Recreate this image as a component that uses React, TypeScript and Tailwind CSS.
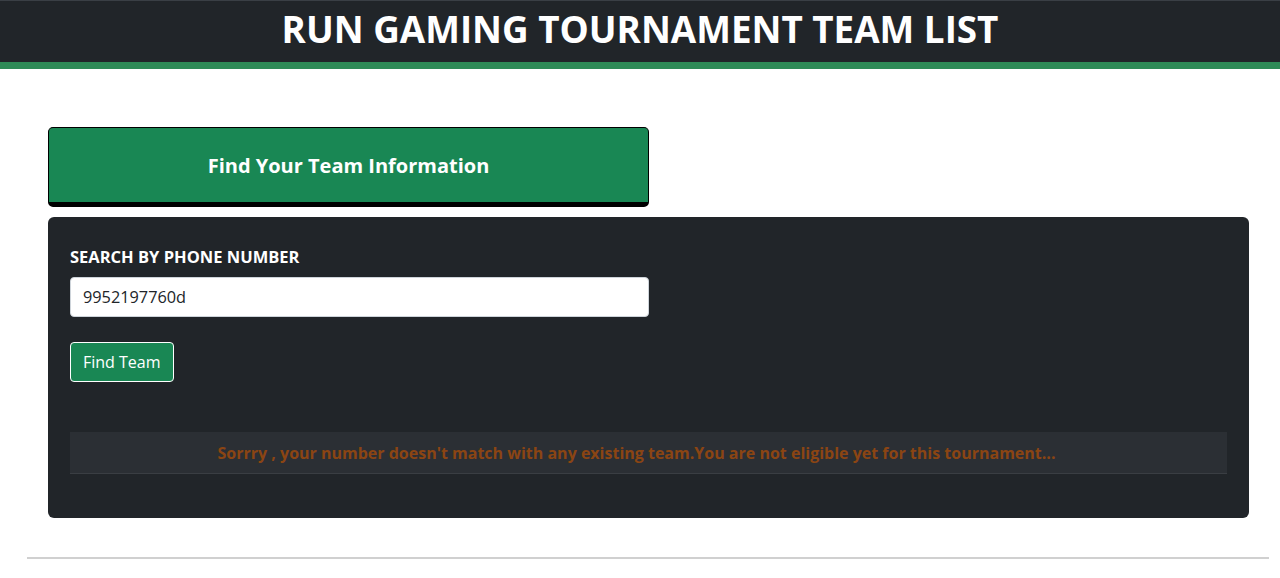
import React from 'react';

export default function App() {
  return (
    <div className="min-h-[578px] bg-white" style={{ fontFamily: '"Open Sans", "Noto Sans", sans-serif' }}>
      <header className="h-[69px] bg-[#212529] border-t border-[#3a3f45] border-b-[7px] border-b-[#2e8b57] flex items-center justify-center pb-[5px]">
        <h1 className="text-[36.8px] font-bold text-white leading-none">RUN GAMING TOURNAMENT TEAM LIST</h1>
      </header>

      <main className="pt-[58px] pl-[48px] pr-[31px]">
        <div className="w-[601px] h-[80px] bg-[#198754] border border-black border-b-[5px] rounded-[5px] flex items-center justify-center pt-[2px]">
          <h2 className="text-[20px] font-bold text-white">Find Your Team Information</h2>
        </div>

        <section className="mt-[10px] bg-[#212529] rounded-[6px] pt-[29px] pb-[44px] px-[22px]">
          <label className="block text-[16.5px] font-bold text-white leading-[22px]">SEARCH BY PHONE NUMBER</label>
          <input
            readOnly
            value="9952197760d"
            className="mt-[9px] block w-[579px] h-[40px] bg-white border border-[#ced4da] rounded-[4px] px-[12px] text-[16.3px] text-[#212529] outline-none"
          />
          <button className="mt-[25px] h-[40px] px-[12px] bg-[#198754] border border-white rounded-[4px] text-[16px] text-white">
            Find Team
          </button>
          <div className="mt-[50px] h-[42px] bg-[#2b2f34] border-b border-[#3a3e43] flex items-center justify-center pr-[24px]">
            <p className="text-[16px] font-bold text-[#8b4513]">
              Sorrry , your number doesn't match with any existing team.You are not eligible yet for this tournament...
            </p>
          </div>
        </section>
      </main>

      <hr className="mt-[39px] ml-[27px] mr-[11px] border-t-2 border-[#d0d0d0]" />
    </div>
  );
}
